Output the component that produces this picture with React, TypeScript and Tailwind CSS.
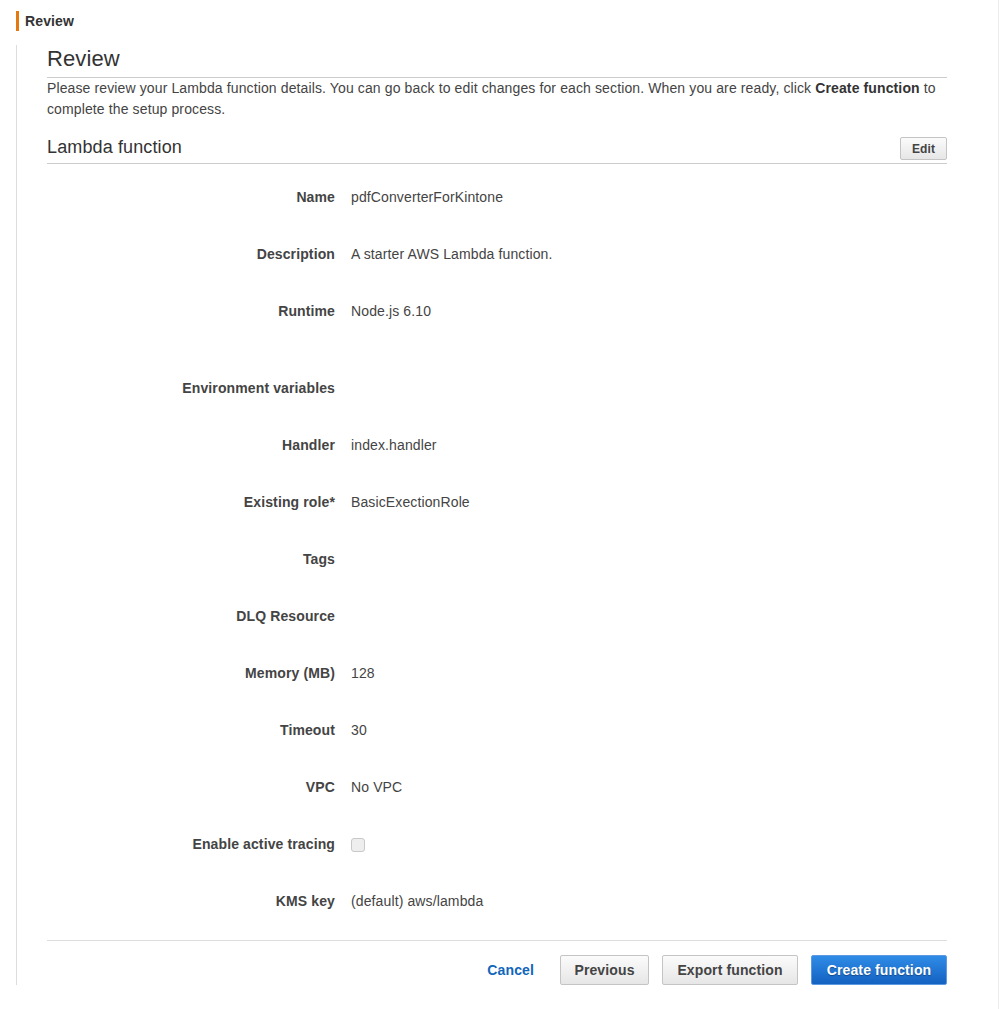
const ROWS: { label: string; value?: string; checkbox?: boolean; extraTop?: boolean }[] = [
  { label: "Name", value: "pdfConverterForKintone" },
  { label: "Description", value: "A starter AWS Lambda function." },
  { label: "Runtime", value: "Node.js 6.10" },
  { label: "Environment variables", extraTop: true },
  { label: "Handler", value: "index.handler" },
  { label: "Existing role*", value: "BasicExectionRole" },
  { label: "Tags" },
  { label: "DLQ Resource" },
  { label: "Memory (MB)", value: "128" },
  { label: "Timeout", value: "30" },
  { label: "VPC", value: "No VPC" },
  { label: "Enable active tracing", checkbox: true },
  { label: "KMS key", value: "(default) aws/lambda" },
];

function GrayButton({ children, className = "" }: { children: React.ReactNode; className?: string }) {
  return (
    <button
      type="button"
      className={`rounded-[2px] border border-[#c4c4c4] bg-linear-to-b from-[#fbfbfb] to-[#e6e6e6] font-bold text-[#444] ${className}`}
    >
      {children}
    </button>
  );
}

export default function App() {
  return (
    <div className="min-h-[1009px] w-[999px] border-r border-[#ececec] bg-white font-['Liberation_Sans',Arial,sans-serif] text-[14px] tracking-[0.12px] text-[#444]">
      <div className="pl-[16px] pt-[11px]">
        <div className="h-[20px] border-l-[3px] border-[#e47911] pl-[6px] text-[14px] font-bold leading-[20px] text-[#333]">
          Review
        </div>
      </div>

      <div className="ml-[16px] mt-[14px] border-l border-[#dddddd] pl-[30px]">
        <div className="w-[900px]">
          <h2 className="border-b border-[#cccccc] pb-[4px] text-[22px] font-normal leading-[28px] text-[#333]">
            Review
          </h2>
          <p className="leading-[21px]">
            Please review your Lambda function details. You can go back to edit changes for each section. When you are
            ready, click <b className="text-[#333]">Create function</b> to complete the setup process.
          </p>

          <div className="flex items-center justify-between border-b border-[#cccccc] pb-[3px] pt-[17px]">
            <h3 className="mb-[3px] text-[18px] font-normal leading-[20px] text-[#333]">Lambda function</h3>
            <GrayButton className="h-[23px] w-[47px] text-[12px]">Edit</GrayButton>
          </div>

          <div className="pt-[5px]">
            {ROWS.map((row) => (
              <div key={row.label} className={row.extraTop ? "pt-[20px]" : ""}>
                <div className="flex h-[57px] items-center">
                  <div className="w-[288px] text-right font-bold">{row.label}</div>
                  <div className="ml-[16px]">
                    {row.checkbox ? (
                      <div className="h-[14px] w-[14px] rounded-[3px] border border-[#c8c8c8] bg-[#eeeeee]" />
                    ) : (
                      row.value
                    )}
                  </div>
                </div>
              </div>
            ))}
          </div>

          <div className="mt-[10px] flex items-center justify-end gap-[13px] border-t border-[#dddddd] pt-[14px]">
            <button type="button" className="h-[30px] px-[13px] text-[14px] font-bold text-[#1166bb]">
              Cancel
            </button>
            <GrayButton className="h-[30px] w-[89px] text-[14px]">Previous</GrayButton>
            <GrayButton className="h-[30px] w-[136px] text-[14px]">Export function</GrayButton>
            <button
              type="button"
              className="h-[30px] w-[136px] rounded-[2px] border border-[#5d98e2] bg-linear-to-b from-[#2f8ce6] to-[#1461c2] text-[14px] font-bold text-white [text-shadow:0_1px_1px_rgba(0,0,0,0.35)]"
            >
              Create function
            </button>
          </div>
        </div>
      </div>
    </div>
  );
}
